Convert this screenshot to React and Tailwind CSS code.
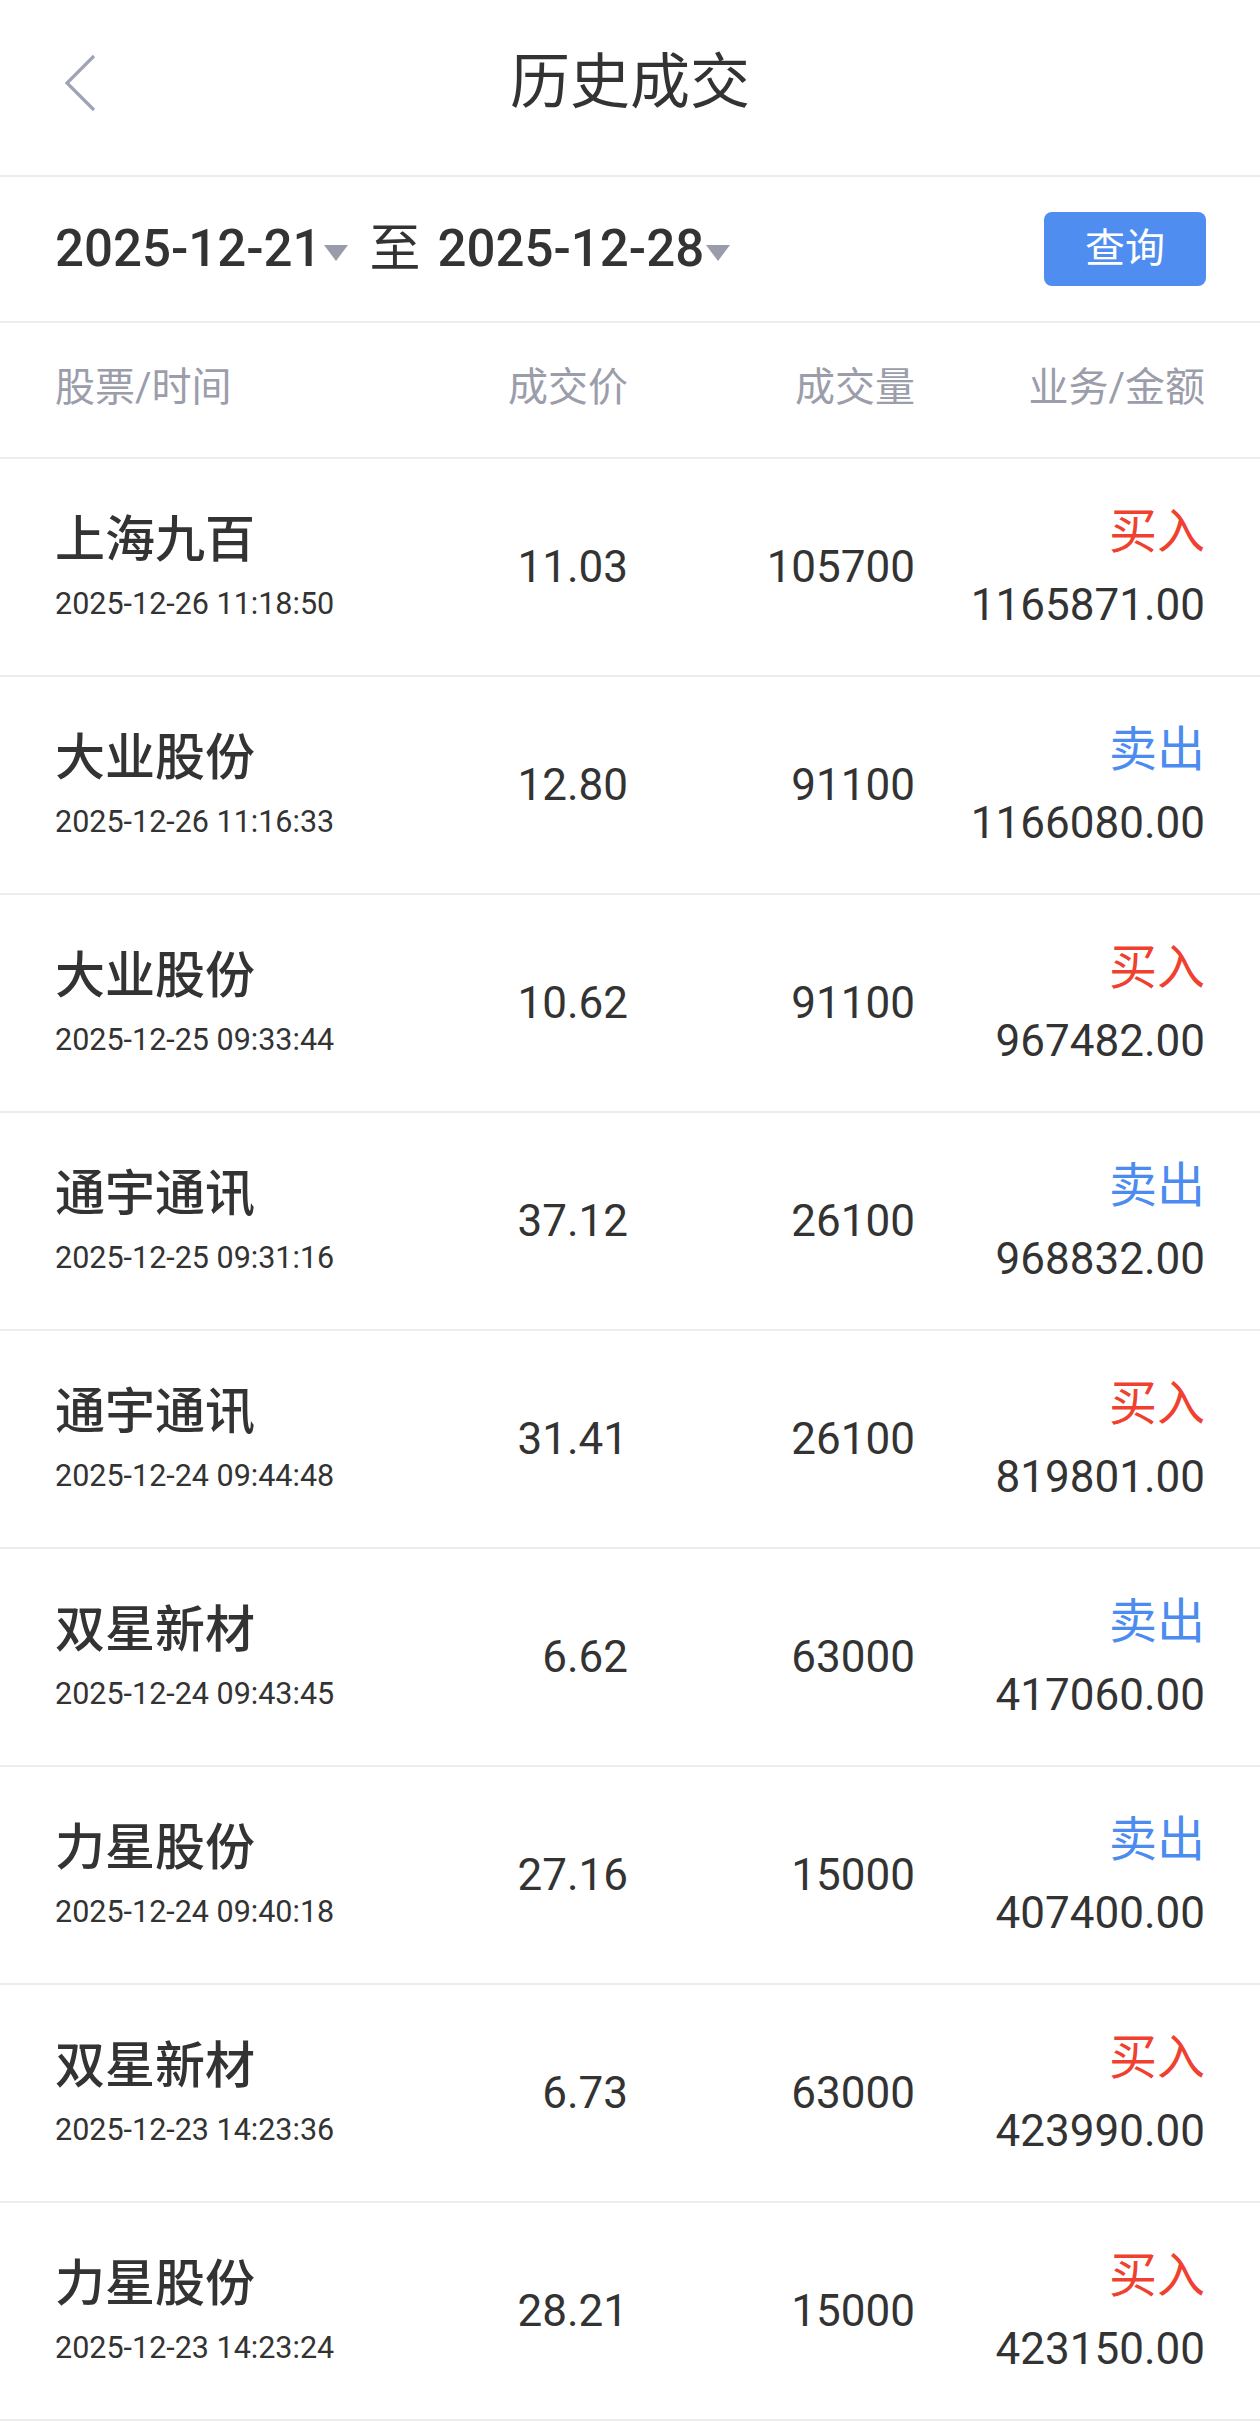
import React from "react";

const rows = [
  ["上海九百", "2025-12-26 11:18:50", "11.03", "105700", "买入", "1165871.00"],
  ["大业股份", "2025-12-26 11:16:33", "12.80", "91100", "卖出", "1166080.00"],
  ["大业股份", "2025-12-25 09:33:44", "10.62", "91100", "买入", "967482.00"],
  ["通宇通讯", "2025-12-25 09:31:16", "37.12", "26100", "卖出", "968832.00"],
  ["通宇通讯", "2025-12-24 09:44:48", "31.41", "26100", "买入", "819801.00"],
  ["双星新材", "2025-12-24 09:43:45", "6.62", "63000", "卖出", "417060.00"],
  ["力星股份", "2025-12-24 09:40:18", "27.16", "15000", "卖出", "407400.00"],
  ["双星新材", "2025-12-23 14:23:36", "6.73", "63000", "买入", "423990.00"],
  ["力星股份", "2025-12-23 14:23:24", "28.21", "15000", "买入", "423150.00"],
];

function Caret() {
  return (
    <svg width="26" height="18" viewBox="0 0 26 18" className="ml-[1px] mt-[8px]">
      <path d="M1 1 H25 L13 17 Z" fill="#9a9cab" />
    </svg>
  );
}

export default function App() {
  return (
    <div
      className="w-[1260px] min-h-[2429px] bg-white text-[#333333]"
      style={{ fontFamily: 'Roboto, "Noto Sans CJK SC", sans-serif' }}
    >
      {/* Header */}
      <div className="relative h-[177px] border-b-2 border-[#ebebf0] flex items-center justify-center pb-[10px]">
        <svg
          width="34"
          height="60"
          viewBox="0 0 34 60"
          className="absolute left-[63px] top-[54px]"
        >
          <path d="M31 2 L4 29 L31 56" fill="none" stroke="#9ea3b5" strokeWidth="3.2" />
        </svg>
        <div className="text-[60px] leading-[72px] text-[#333333]">历史成交</div>
      </div>

      {/* Date row */}
      <div className="h-[146px] border-b-2 border-[#ebebf0] flex items-center pl-[55px] pr-[54px]">
        <div className="flex items-center text-[51px] leading-[60px] font-medium text-[#333333]">
          <span>2025-12-21</span>
          <Caret />
          <span className="ml-[21px] font-normal">至</span>
          <span className="ml-[17px]">2025-12-28</span>
          <Caret />
        </div>
        <div className="ml-auto w-[162px] h-[74px] rounded-[8px] bg-[#4f8ef0] flex items-center justify-center text-white text-[40px] leading-[50px]">
          查询
        </div>
      </div>

      {/* Table header */}
      <div className="h-[136px] border-b-2 border-[#ebebf0] grid grid-cols-[1fr_250px_287px_290px] items-center px-[55px] pb-[4px] text-[40px] leading-[50px] text-[#9b9daa]">
        <div>股票/时间</div>
        <div className="text-right">成交价</div>
        <div className="text-right">成交量</div>
        <div className="text-right">业务/金额</div>
      </div>

      {/* Rows */}
      {rows.map((r, i) => (
        <div
          key={i}
          className="h-[218px] border-b-2 border-[#ebebf0] grid grid-cols-[1fr_250px_287px_290px] items-center px-[55px]"
        >
          <div className="flex flex-col">
            <div className="text-[50px] leading-[60px] font-medium">{r[0]}</div>
            <div className="text-[30.5px] leading-[40px] mt-[14px]">{r[1]}</div>
          </div>
          <div className="text-right text-[44px] leading-[52px]">{r[2]}</div>
          <div className="text-right text-[44px] leading-[52px]">{r[3]}</div>
          <div className="flex flex-col items-end">
            <div
              className={
                r[4] === "买入"
                  ? "text-[48px] leading-[56px] text-[#f0402f]"
                  : "text-[48px] leading-[56px] text-[#4c8bf0]"
              }
            >
              {r[4]}
            </div>
            <div className="text-[44px] leading-[52px] mt-[19px]">{r[5]}</div>
          </div>
        </div>
      ))}
    </div>
  );
}
